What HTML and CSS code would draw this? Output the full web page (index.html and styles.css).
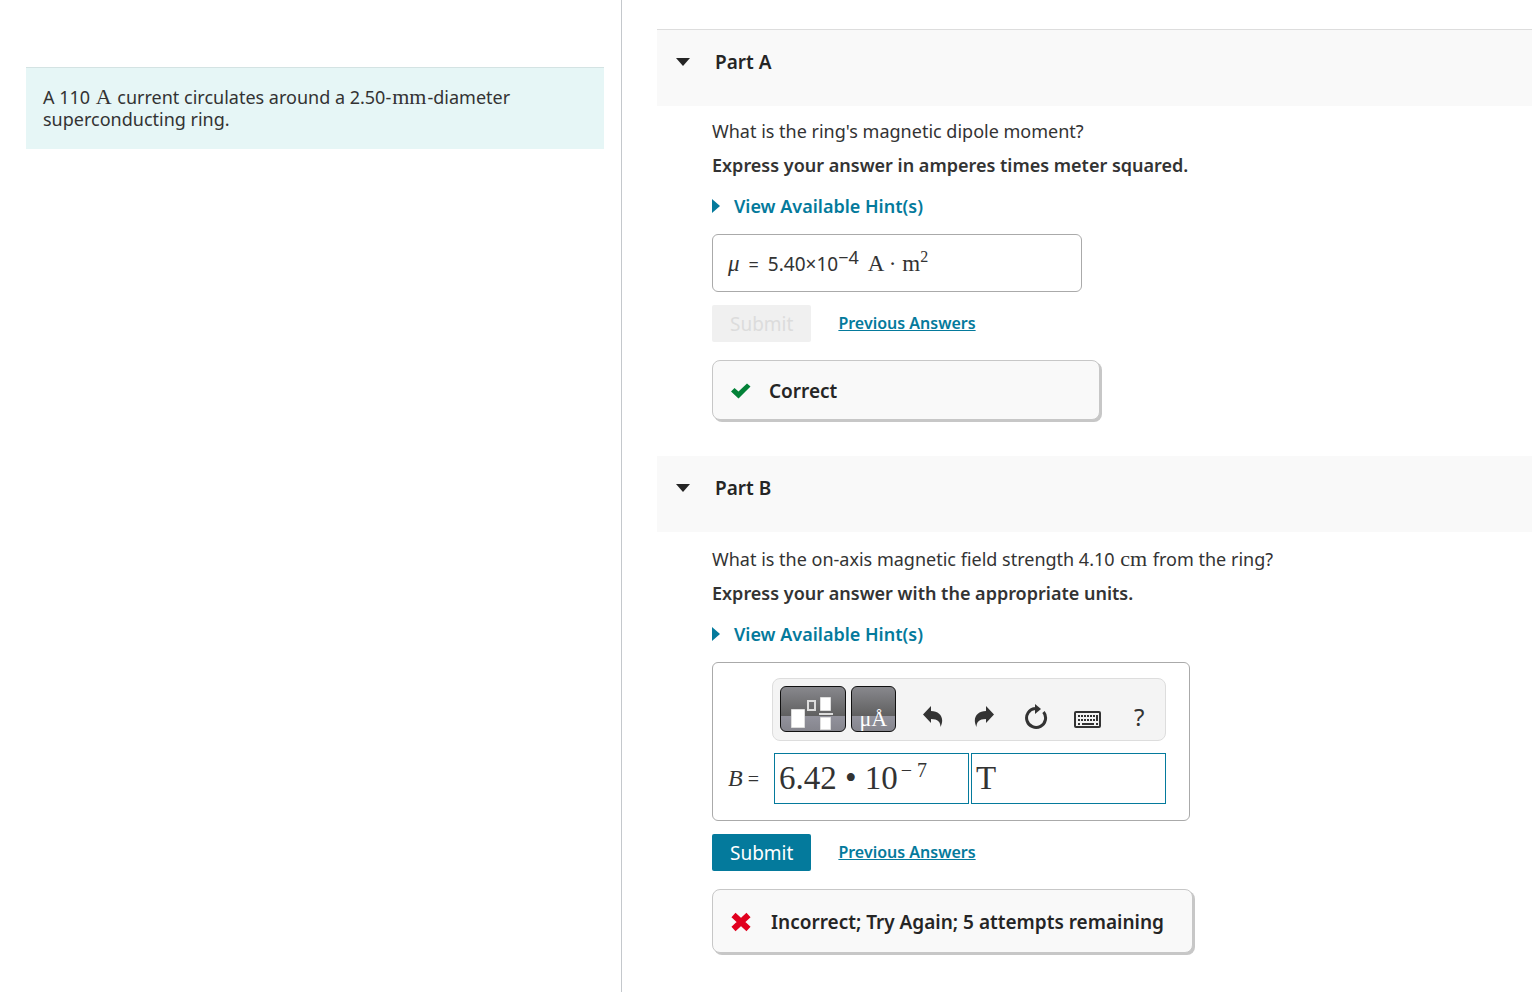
FILE: index.html
```
<!DOCTYPE html>
<html lang="en">
  <head>
    <meta charset="UTF-8" />
    <title>Magnetic dipole of a superconducting ring</title>
    <link rel="stylesheet" href="styles.css">
  </head>
  <body>
    <div class="page">
      <aside class="side">
        <div class="problem">
          A 110 <span class="unit">A</span> current circulates around a 2.50-<span class="unit">mm</span>-diameter superconducting ring.
        </div>
      </aside>

      <main class="parts">
        <section class="part">
          <h2 class="part_head first">
            <button type="button" class="toggle" aria-expanded="true">
              <svg class="caret" viewBox="0 0 14 8" aria-hidden="true"><path d="M0 0h14L7 8z" /></svg>
              Part A
            </button>
          </h2>
          <div class="part_body">
            <p class="question">What is the ring's magnetic dipole moment?</p>
            <p class="instruction">Express your answer in amperes times meter squared.</p>
            <button type="button" class="hint" aria-expanded="false">
              <svg class="arrow" viewBox="0 0 8 14" aria-hidden="true"><path d="M0 0l8 7-8 7z" /></svg>
              View Available Hint(s)
            </button>
            <div class="answer">
              <i class="math">μ</i>
              <span class="eq">=</span>
              <span class="value">5.40×10<sup>−4</sup></span>
              <span class="math">A · m<sup>2</sup></span>
            </div>
            <div class="actions">
              <button type="button" class="submit" disabled>Submit</button>
              <a href="#" class="previous">Previous Answers</a>
            </div>
            <div class="feedback correct">
              <svg class="mark" viewBox="0 0 20 20" aria-hidden="true"><path fill="#038238" d="M0 10.500l3.500-3.500 4 3.500L16 2.500 19.500 5.500 7.500 17.500z" /></svg>
              Correct
            </div>
          </div>
        </section>

        <section class="part">
          <h2 class="part_head">
            <button type="button" class="toggle" aria-expanded="true">
              <svg class="caret" viewBox="0 0 14 8" aria-hidden="true"><path d="M0 0h14L7 8z" /></svg>
              Part B
            </button>
          </h2>
          <div class="part_body">
            <p class="question">What is the on-axis magnetic field strength 4.10 <span class="unit">cm</span> from the ring?</p>
            <p class="instruction">Express your answer with the appropriate units.</p>
            <button type="button" class="hint" aria-expanded="false">
              <svg class="arrow" viewBox="0 0 8 14" aria-hidden="true"><path d="M0 0l8 7-8 7z" /></svg>
              View Available Hint(s)
            </button>
            <div class="editor">
              <div class="toolbar" role="toolbar" aria-label="Equation tools">
                <button type="button" class="dark wide" aria-label="Templates">
                  <svg width="64" height="44" viewBox="0 0 64 44" aria-hidden="true">
                    <path fill="#fff" stroke="#ddd" d="M10.500 22.500h13v18h-13zM39.500 10.500h10v13h-10zM39.500 30.500h10v12h-10z" />
                    <path fill="none" stroke="#ddd" stroke-width="2" d="M27 14h7v9h-7zM38 27h14" />
                  </svg>
                </button>
                <button type="button" class="dark symbols" aria-label="Symbols">μÅ</button>
                <button type="button" class="tool" aria-label="Undo">
                  <svg width="20" height="22" viewBox="0 0 20 22" aria-hidden="true"><path d="M0 8.500L8 0v5c9 0 14 7 9.500 16 0-5-2.500-8-9.500-8v4z" /></svg>
                </button>
                <button type="button" class="tool" aria-label="Redo">
                  <svg width="20" height="22" viewBox="0 0 20 22" aria-hidden="true"><path d="M20 8.500L12 0v5C3 5-2 12 2.500 21c0-5 2.500-8 9.500-8v4z" /></svg>
                </button>
                <button type="button" class="tool" aria-label="Reset">
                  <svg width="24" height="26" viewBox="0 0 24 26" aria-hidden="true">
                    <path fill="none" stroke="#333" stroke-width="3" d="M19.500 8A9.500 9.500 0 1 1 11 4.500" />
                    <path d="M11 0l6 5-6 5z" />
                  </svg>
                </button>
                <button type="button" class="tool keyboard" aria-label="Keyboard shortcuts">
                  <svg width="28" height="17" viewBox="0 0 28 17" aria-hidden="true">
                    <rect x="1" y="1" width="25" height="15" rx="1" fill="none" stroke="#333" stroke-width="2" />
                    <path fill="none" stroke="#333" stroke-width="2" stroke-dasharray="2 1" d="M4 5h18M4 9h19" />
                    <path fill="none" stroke="#333" stroke-width="2" d="M4 13h2M8 13h12M22 13h2M23 4v6" />
                  </svg>
                </button>
                <button type="button" class="tool help" aria-label="Help">?</button>
              </div>
              <div class="entry">
                <span class="entry_label" id="fieldLabel"><i>B</i> =</span>
                <div class="field" role="textbox" contenteditable="true" spellcheck="false" aria-labelledby="fieldLabel">6.42 • 10<sup>− 7</sup></div>
                <input class="field" type="text" value="T" aria-label="Units" />
              </div>
            </div>
            <div class="actions">
              <button type="button" class="submit">Submit</button>
              <a href="#" class="previous">Previous Answers</a>
            </div>
            <div class="feedback incorrect">
              <svg class="mark" viewBox="0 0 20 20" aria-hidden="true"><path fill="none" stroke="#e1001e" stroke-width="6" d="M2.500 3l15 14M17.500 3l-15 14" /></svg>
              Incorrect; Try Again; 5 attempts remaining
            </div>
          </div>
        </section>
      </main>
    </div>
  </body>
</html>
```
FILE: styles.css
```
* {
  box-sizing: border-box;
}

body {
  margin: 0;
  color: #333;
  background-color: #fff;
  font-family: "Segoe UI", "Noto Sans", "Open Sans", sans-serif;
  font-size: 18px;
  line-height: 24px;
}

button,
input {
  font: inherit;
  color: inherit;
}

button {
  padding: 0;
  border: 0;
  background: none;
  cursor: pointer;
}

p,
h2 {
  margin: 0;
}

svg {
  display: block;
  flex-shrink: 0;
  fill: #333;
}

sup {
  line-height: 0;
}

.page {
  display: grid;
  grid-template-columns: 622px 1fr;
  min-height: 100vh;
}

.side {
  padding: 67px 17px 0 26px;
  border-right: 1px solid #c4c8cc;
}

.problem {
  padding: 18px 17px 19px;
  border-top: 1px solid #d4e3e3;
  background-color: #e6f6f6;
  line-height: 22px;
}

.unit {
  margin: 0 1px;
  font-family: "Liberation Serif", serif;
  font-size: 22px;
  line-height: 20px;
}

.parts {
  padding: 29px 0 36px 35px;
}

.part_head {
  height: 76px;
  padding: 20px 19px;
  background-color: #f9f9f9;
  font-size: 19px;
  font-weight: 600;
}

.first {
  height: 77px;
  border-top: 1px solid #ddd;
}

.toggle {
  display: flex;
  align-items: center;
  gap: 25px;
  color: #252525;
}

.caret {
  width: 14px;
  height: 8px;
  fill: #252525;
}

.part_body {
  display: flex;
  flex-direction: column;
  align-items: flex-start;
  padding: 13px 24px 36px 55px;
}

.part:last-child .part_body {
  padding-top: 15px;
  padding-bottom: 0;
}

.instruction {
  margin-top: 10px;
  font-weight: 600;
}

.hint {
  display: flex;
  align-items: center;
  gap: 14px;
  margin: 17px 0 16px;
  color: #047a9c;
  font-weight: 600;
}

.arrow {
  width: 8px;
  height: 14px;
  fill: #047a9c;
}

.answer {
  display: flex;
  align-items: center;
  gap: 9px;
  width: 370px;
  height: 58px;
  padding: 2px 15px 0;
  border: 1px solid #aaa;
  border-radius: 6px;
}

.math {
  font-family: "Liberation Serif", serif;
  font-size: 23px;
}

.math sup {
  font-size: 16px;
}

.value {
  font-size: 19px;
}

.value sup {
  font-size: 18px;
}

.actions {
  display: flex;
  align-items: center;
  gap: 27px;
  margin: 13px 0 18px;
}

.submit {
  height: 37px;
  padding: 0 18px;
  border-radius: 2px;
  background-color: #047a9c;
  color: #fff;
  font-size: 19px;
}

.submit:disabled {
  background-color: #f0f0f0;
  color: #dcdcdc;
  cursor: default;
}

.previous {
  padding-bottom: 2px;
  color: #047a9c;
  font-size: 16px;
  font-weight: 600;
}

.feedback {
  display: flex;
  align-items: center;
  gap: 18px;
  padding: 1px 18px 0;
  border: 1px solid #c7c7c7;
  border-radius: 8px;
  background-color: #f9f9f9;
  box-shadow: 2px 2px 0 #c7c7c7;
  color: #252525;
  font-size: 19px;
  font-weight: 600;
}

.correct {
  width: 388px;
  height: 60px;
}

.incorrect {
  gap: 20px;
  padding-right: 28px;
  height: 64px;
}

.mark {
  width: 20px;
  height: 20px;
}

.editor {
  width: 478px;
  padding: 15px 23px 16px 15px;
  border: 1px solid #aaa;
  border-radius: 6px;
}

.toolbar {
  display: flex;
  align-items: center;
  height: 63px;
  margin-left: 44px;
  padding: 0 0 1px 7px;
  border: 1px solid #ddd;
  border-radius: 8px;
  background-color: #f4f4f4;
}

.tool {
  width: 52px;
  padding-top: 16px;
}

.tool svg {
  margin: 0 auto;
}

.keyboard {
  padding-top: 20px;
}

.dark {
  height: 46px;
  border: 1px solid #111;
  border-radius: 6px;
  background: linear-gradient(#88888d, #5f5f5f 67%, #92929c 67%, #85858d);
  color: #fff;
}

.wide {
  width: 66px;
}

.symbols {
  width: 45px;
  margin: 0 11px 0 5px;
  padding-top: 20px;
  font-family: "Liberation Serif", serif;
  font-size: 22px;
}

.help {
  font-size: 24px;
}

.entry {
  display: flex;
  align-items: center;
  gap: 2px;
  margin-top: 12px;
}

.entry_label {
  width: 44px;
  font-family: "Liberation Serif", serif;
  font-size: 20px;
  white-space: nowrap;
}

.entry_label i {
  font-size: 24px;
}

.field {
  flex: 1;
  min-width: 0;
  height: 51px;
  padding: 0 4px;
  border: 1px solid #047a9c;
  background-color: #fff;
  font-family: "Liberation Serif", serif;
  font-size: 33px;
  line-height: 49px;
  white-space: nowrap;
}

.field sup {
  margin-left: 3px;
  font-size: 20px;
}
```
